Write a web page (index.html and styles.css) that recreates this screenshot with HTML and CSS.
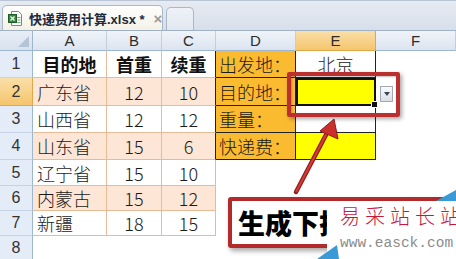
FILE: index.html
```html
<!DOCTYPE html>
<html lang="zh">
<head>
<meta charset="utf-8">
<link rel="stylesheet" href="styles.css">
</head>
<body>
<div class="page">
  <div class="tabbar">
    <div class="tab active">
      <svg class="xl-icon" width="14" height="15" viewBox="0 0 14 15">
        <path d="M3.5 0.5h7l3 3v11h-10z" fill="#fff" stroke="#7a8a7a"/>
        <rect x="0.5" y="3.5" width="8" height="8" fill="#2f8a3a" stroke="#1d5e26"/>
        <path d="M2.5 5.5l4 4M6.5 5.5l-4 4" stroke="#fff" stroke-width="1.3"/>
        <path d="M9.5 6.5h3M9.5 9h3M9.5 11.5h3" stroke="#6aa86f"/>
      </svg>
      <span class="tab-title">快递费用计算.xlsx *</span>
      <span class="tab-close">×</span>
    </div>
    <div class="tab blank"></div>
  </div>

  <div class="grid">
    <div class="corner"></div>
    <div class="colh">A</div><div class="colh">B</div><div class="colh">C</div>
    <div class="colh">D</div><div class="colh sel">E</div><div class="colh">F</div>

    <div class="rowh">1</div>
    <div class="c hd">目的地</div><div class="c hd">首重</div><div class="c hd edge">续重</div>
    <div class="d lab">出发地：</div><div class="d val">北京</div><div class="e"></div>

    <div class="rowh sel">2</div>
    <div class="c peach txt">广东省</div><div class="c peach num">12</div><div class="c peach num edge">10</div>
    <div class="d lab">目的地：</div><div class="d yel cur"><span class="handle"></span></div><div class="e"></div>

    <div class="rowh">3</div>
    <div class="c txt">山西省</div><div class="c num">12</div><div class="c num edge">12</div>
    <div class="d lab">重量：</div><div class="d val"></div><div class="e"></div>

    <div class="rowh">4</div>
    <div class="c peach txt">山东省</div><div class="c peach num">15</div><div class="c peach num edge">6</div>
    <div class="d lab">快递费：</div><div class="d yel"></div><div class="e"></div>

    <div class="rowh">5</div>
    <div class="c txt">辽宁省</div><div class="c num">15</div><div class="c num">10</div>
    <div class="e"></div><div class="e"></div><div class="e"></div>

    <div class="rowh">6</div>
    <div class="c peach txt">内蒙古</div><div class="c peach num">15</div><div class="c peach num">12</div>
    <div class="e"></div><div class="e"></div><div class="e"></div>

    <div class="rowh">7</div>
    <div class="c txt">新疆</div><div class="c num">18</div><div class="c num">15</div>
    <div class="e"></div><div class="e"></div><div class="e"></div>

    <div class="rowh">8</div>
    <div class="e"></div><div class="e"></div><div class="e"></div>
    <div class="e"></div><div class="e"></div><div class="e"></div>
  </div>

  <div class="dropbtn"><span class="tri"></span></div>
  <div class="hilite"></div>

  <svg class="arrow" width="456" height="259" viewBox="0 0 456 259">
    <line x1="296" y1="192" x2="328" y2="131" stroke="#8e1d1d" stroke-width="4.5" stroke-linecap="round"/>
    <line x1="296" y1="192" x2="328" y2="131" stroke="#d83a36" stroke-width="2"/>
    <polygon points="334,119 338,139 320,131" fill="#c9302c" stroke="#8e1d1d" stroke-width="1"/>
  </svg>

  <div class="callout">生成下拉</div>

  <div class="watermark">
    <svg class="wm-tri" width="129" height="66" viewBox="0 0 129 66">
      <polygon points="109,8 129,-3 129,8" fill="#3a9ad8"/>
      <polygon points="-10,66 10,52 12,66" fill="#3a9ad8"/>
    </svg>
    <div class="wm-cn">易采站长站</div>
    <div class="wm-en">www.easck.com</div>
  </div>
</div>
</body>
</html>
```

FILE: styles.css
```css
html, body {
  margin: 0;
  padding: 0;
  background: #ffffff;
}

.page {
  position: relative;
  width: 456px;
  height: 259px;
  overflow: hidden;
  font-family: "Noto Sans CJK SC", "Liberation Sans", sans-serif;
}

/* ---------- tab bar ---------- */
.tabbar {
  height: 31px;
  box-sizing: border-box;
  display: flex;
  align-items: flex-end;
  gap: 3px;
  padding-left: 2px;
  background: linear-gradient(#e6ebf2, #d6dfea);
  border-top: 1px solid #b9c5d4;
  border-bottom: 1px solid #9fb0c4;
}

.tab {
  box-sizing: border-box;
  border: 1px solid #a9b7c9;
  border-bottom: none;
  border-radius: 5px 5px 0 0;
}

.tab.active {
  width: 161px;
  height: 25px;
  display: flex;
  align-items: center;
  padding-left: 5px;
  background: linear-gradient(#fefefd, #f4f1e6);
}

.tab.blank {
  width: 28px;
  height: 23px;
  background: linear-gradient(#eef2f7, #e2e8f0);
}

.xl-icon {
  flex: none;
  margin-right: 7px;
}

.tab-title {
  font-family: "Liberation Sans", "Noto Sans CJK SC", sans-serif;
  font-size: 13px;
  font-weight: bold;
  color: #1b2a3c;
  white-space: nowrap;
}

.tab-close {
  margin-left: 9px;
  font-family: "Liberation Sans", sans-serif;
  font-size: 15px;
  font-weight: bold;
  color: #9a9a9a;
}

/* ---------- grid ---------- */
.grid {
  display: grid;
  grid-template-columns: 33px 74px 55px 54px 80px 80px 80px;
  grid-template-rows: 20px 27px 28px 27px 27px 26px 25px 25px 25px;
}

.grid > div {
  box-sizing: border-box;
  display: flex;
  align-items: center;
  white-space: nowrap;
}

.corner {
  position: relative;
  background: linear-gradient(#e8eef6, #d8e2ee);
  border-right: 1px solid #9eb6ce;
  border-bottom: 1px solid #9eb6ce;
}

.corner::after {
  content: "";
  position: absolute;
  right: 3px;
  bottom: 3px;
  border-left: 11px solid transparent;
  border-bottom: 11px solid #b4c3d6;
}

.colh {
  justify-content: center;
  font-family: "Liberation Sans", sans-serif;
  font-size: 15px;
  color: #2c2c2c;
  background: linear-gradient(#f0f4fa, #dbe4ef);
  border-right: 1px solid #c2cfdf;
  border-bottom: 1px solid #9eb6ce;
}

.colh.sel,
.rowh.sel {
  background: linear-gradient(#fadfa8, #f4c56d);
  border-color: #e0a84a;
}

.rowh {
  justify-content: center;
  font-family: "Liberation Sans", sans-serif;
  font-size: 16px;
  color: #333333;
  background: #e4ecf7;
  border-right: 1px solid #9eb6ce;
  border-bottom: 1px solid #c5d3e4;
}

.c {
  font-size: 18px;
  font-weight: 300;
  color: #1a1a1a;
  border-right: 1px solid #e6bc98;
  border-bottom: 1px solid #e6bc98;
}

.c.peach {
  background: #fde6d5;
}

.c.hd {
  justify-content: center;
  font-weight: bold;
  color: #111111;
}

.c.txt {
  padding-left: 4px;
}

.c.num {
  justify-content: center;
}

.c.edge {
  border-right-color: #222222;
}

.d {
  font-size: 18px;
  font-weight: 300;
  color: #1a1a1a;
  border-right: 1px solid #222222;
  border-bottom: 1px solid #222222;
}

.d.lab {
  padding-left: 3px;
  background: #fbbb30;
}

.d.val {
  justify-content: center;
  background: #ffffff;
}

.d.yel {
  background: #ffff00;
}

.d.cur {
  position: relative;
  border: 2px solid #111111;
}

.handle {
  position: absolute;
  right: -4px;
  bottom: -4px;
  width: 5px;
  height: 5px;
  background: #111111;
  border: 1px solid #ffffff;
}

.e {
  background: #ffffff;
}

/* ---------- overlays ---------- */
.dropbtn {
  position: absolute;
  left: 380px;
  top: 86px;
  width: 13px;
  height: 16px;
  box-sizing: border-box;
  border: 1px solid #a3a8b2;
  background: linear-gradient(#fbfbfd, #d9dde6);
  display: flex;
  align-items: center;
  justify-content: center;
}

.tri {
  border-left: 3px solid transparent;
  border-right: 3px solid transparent;
  border-top: 4px solid #3b4556;
}

.hilite {
  position: absolute;
  left: 287px;
  top: 72px;
  width: 113px;
  height: 45px;
  box-sizing: border-box;
  border: 4px solid #bc2f2f;
  border-radius: 2px;
  box-shadow: 2px 2px 4px rgba(0, 0, 0, 0.35), inset 1px 1px 2px rgba(0, 0, 0, 0.25);
}

.arrow {
  position: absolute;
  left: 0;
  top: 0;
  pointer-events: none;
}

.callout {
  position: absolute;
  left: 228px;
  top: 197px;
  width: 250px;
  height: 51px;
  box-sizing: border-box;
  padding-left: 6px;
  border: 4px solid #b22a2a;
  border-radius: 3px;
  background: #ffffff;
  box-shadow: 2px 3px 5px rgba(0, 0, 0, 0.35);
  display: flex;
  align-items: center;
  font-family: "Noto Sans CJK SC", sans-serif;
  font-size: 27px;
  font-weight: 900;
  color: #000000;
}

.watermark {
  position: absolute;
  left: 327px;
  top: 201px;
  width: 129px;
  height: 58px;
  background: #ffffff;
  box-sizing: border-box;
  padding: 4px 0 0 13px;
}

.wm-tri {
  position: absolute;
  left: 0;
  top: -8px;
  overflow: visible;
}

.wm-cn {
  position: relative;
  font-family: "Noto Sans CJK SC", serif;
  font-size: 20px;
  font-weight: 300;
  line-height: 22px;
  color: #c8163c;
  letter-spacing: 5px;
  white-space: nowrap;
}

.wm-en {
  position: relative;
  margin-top: 9px;
  font-family: "Liberation Mono", monospace;
  font-size: 14.5px;
  line-height: 15px;
  color: #8c8c8c;
  white-space: nowrap;
}
```
